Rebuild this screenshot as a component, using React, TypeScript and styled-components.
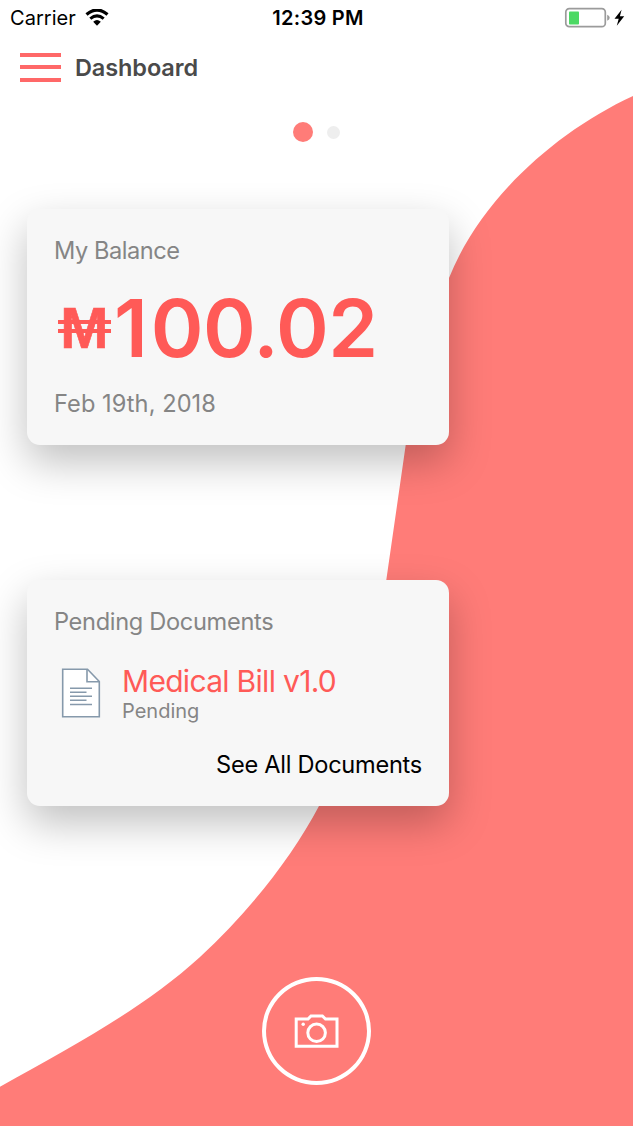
import React from "react";
import styled, { createGlobalStyle } from "styled-components";

const GlobalStyle = createGlobalStyle`
  * { box-sizing: border-box; }
  body { margin: 0; background: #fff; font-family: Inter, "Liberation Sans", sans-serif; }
`;

const Screen = styled.div`
  position: relative;
  width: 633px;
  height: 1126px;
  overflow: hidden;
  display: flex;
  flex-direction: column;
  background: #fff;
`;

const Wave = styled.svg`
  position: absolute;
  inset: 0;
`;

const Content = styled.div`
  position: relative;
  flex: 1;
  display: flex;
  flex-direction: column;
`;

const StatusBar = styled.div`
  height: 35px;
  padding: 0 7px 0 10px;
  display: grid;
  grid-template-columns: 1fr auto 1fr;
  align-items: center;
  color: #000;
`;

const StatusGroup = styled.div<{ $end?: boolean }>`
  display: flex;
  align-items: center;
  justify-content: ${(p) => (p.$end ? "flex-end" : "flex-start")};
`;

const Label = styled.span<{
  $size: number;
  $line: number;
  $color?: string;
  $weight?: number;
  $spacing?: number;
}>`
  font-size: ${(p) => p.$size}px;
  line-height: ${(p) => p.$line}px;
  color: ${(p) => p.$color ?? "#000"};
  font-weight: ${(p) => p.$weight ?? 400};
  letter-spacing: ${(p) => p.$spacing ?? 0}px;
  white-space: nowrap;
`;

const LeadDigit = styled.span`
  letter-spacing: 3px;
`;

const WifiIcon = styled.svg`
  margin-left: 9px;
`;

const Header = styled.header`
  height: 66px;
  padding-left: 20px;
  display: flex;
  align-items: center;
  gap: 14px;
`;

const MenuButton = styled.button`
  width: 41px;
  height: 29px;
  margin-bottom: 2px;
  padding: 0;
  border: 0;
  background: none;
  display: flex;
  flex-direction: column;
  justify-content: space-between;
`;

const MenuBar = styled.span`
  height: 4px;
  background: #ff6868;
`;

const Pager = styled.div`
  height: 62px;
  display: flex;
  justify-content: center;
  align-items: center;
  gap: 14px;
`;

const Dot = styled.span<{ $active?: boolean }>`
  width: ${(p) => (p.$active ? 20 : 13)}px;
  height: ${(p) => (p.$active ? 20 : 13)}px;
  border-radius: 50%;
  background: ${(p) => (p.$active ? "#ff7c78" : "#eee")};
`;

const Card = styled.section<{ $top: number; $height: number }>`
  width: 422px;
  height: ${(p) => p.$height}px;
  margin: ${(p) => p.$top}px 0 0 27px;
  padding: 27px 27px 0;
  border-radius: 13px;
  background: #f7f7f7;
  box-shadow: 0 17px 41px rgba(0, 0, 0, 0.25);
  display: flex;
  flex-direction: column;
`;

const Amount = styled.div`
  height: 96px;
  margin: 14px 0 13px;
  padding-left: 4px;
  display: flex;
  align-items: center;
  gap: 3px;
`;

const Currency = styled.span`
  position: relative;
  width: 53px;
  display: flex;
  justify-content: center;
  font: 700 58px/60px "Liberation Sans", Arial, sans-serif;
  color: #ff5a57;
  -webkit-text-stroke: 0.6px #ff5a57;

  &::before,
  &::after {
    content: "";
    position: absolute;
    left: 0;
    right: 0;
    height: 4px;
    background: #ff5a57;
  }
  &::before { top: 22px; }
  &::after { top: 31px; }
`;

const DocumentRow = styled.div`
  display: flex;
  margin-top: 29px;
  padding-left: 7px;
`;

const DocumentText = styled.div`
  display: flex;
  flex-direction: column;
  margin: -3px 0 0 21px;
`;

const Action = styled.button`
  margin: 27px 0 0;
  padding: 0;
  border: 0;
  background: none;
  font-family: inherit;
  align-self: flex-end;
`;

const Footer = styled.footer`
  flex: 1;
  display: flex;
  align-items: flex-end;
  justify-content: center;
  padding-bottom: 41px;
`;

const CameraButton = styled.button`
  width: 109px;
  height: 108px;
  padding: 0;
  border: 4px solid #fff;
  border-radius: 50%;
  background: none;
  display: flex;
  align-items: center;
  justify-content: center;
`;

export default function App() {
  return (
    <Screen>
      <GlobalStyle />
      <Wave width="633" height="1126" viewBox="0 0 633 1126">
        <path
          fill="#ff7c78"
          d="M633 96C555 132 480 200 449 278C425 327 412 400 405.7 445L386.3 580C373 673 345 757 319 806C292 857 249 912 200 957C144 1008 75 1045 0 1086.7V1126H633Z"
        />
      </Wave>
      <Content>
        <StatusBar>
          <StatusGroup>
            <Label $size={20} $line={24} $spacing={0.05}>Carrier</Label>
            <WifiIcon width="24" height="17" viewBox="0 0 24 17">
              <path d="M1.5 5.5Q12-3.5 22.5 5.5" fill="none" stroke="#000" strokeWidth="3.2" />
              <path d="M5.3 9.7Q12 4 18.7 9.7" fill="none" stroke="#000" strokeWidth="3" />
              <path d="M8.2 12.7Q12 9.5 15.8 12.7L12 16.8Z" />
            </WifiIcon>
          </StatusGroup>
          <Label $size={20} $line={24} $weight={600} $spacing={0.3}>12:39 PM</Label>
          <StatusGroup $end>
            <svg width="62" height="22" viewBox="0 0 62 22">
              <rect x="1.8" y="1.7" width="39.5" height="18" rx="3.5" fill="none" stroke="#9b9b9b" strokeWidth="1.7" />
              <rect x="5" y="4.5" width="10" height="13" rx="0.8" fill="#4cd964" />
              <path d="M43.2 7.7Q45.7 8.8 45.7 10.7T43.2 13.7Z" fill="#9b9b9b" />
              <path d="M57.6 2.8L50.5 11.8H54.7L52.8 18.7L60.2 9.3H55.9Z" />
            </svg>
          </StatusGroup>
        </StatusBar>
        <Header>
          <MenuButton aria-label="Menu">
            <MenuBar />
            <MenuBar />
            <MenuBar />
          </MenuButton>
          <Label $size={23.5} $line={30} $weight={600} $color="#4a4a4a" $spacing={-0.1}>Dashboard</Label>
        </Header>
        <Pager>
          <Dot $active />
          <Dot />
        </Pager>
        <Card $top={46} $height={236}>
          <Label $size={23.6} $line={30} $color="#858585" $spacing={-0.45}>My Balance</Label>
          <Amount>
            <Currency>M</Currency>
            <Label $size={80} $line={96} $weight={560} $color="#ff5a57" $spacing={-0.5}>
              <LeadDigit>1</LeadDigit>00.02
            </Label>
          </Amount>
          <Label $size={23.6} $line={30} $color="#858585" $spacing={0.07}>Feb 19th, 2018</Label>
        </Card>
        <Card $top={135} $height={226}>
          <Label $size={23.6} $line={30} $color="#858585" $spacing={-0.32}>Pending Documents</Label>
          <DocumentRow>
            <svg width="40" height="52" viewBox="0 0 40 52">
              <path d="M1.7 3.3H26.5L38.3 15.5V50.7H1.7Z" fill="#fff" stroke="#8699ab" strokeWidth="1.6" />
              <path d="M26 3.3V15.7H38.3" fill="none" stroke="#8699ab" strokeWidth="1.6" />
              <path d="M9 22.3H31M9 26.3H25.5M9 30.3H31M9 34.3H25.5M9 38.5H31" stroke="#8699ab" strokeWidth="1.5" />
            </svg>
            <DocumentText>
              <Label $size={30} $line={36} $color="#ff5a57" $spacing={-0.7}>Medical Bill v1.0</Label>
              <Label $size={20} $line={24} $color="#858585">Pending</Label>
            </DocumentText>
          </DocumentRow>
          <Action>
            <Label $size={23.6} $line={30} $spacing={-0.27}>See All Documents</Label>
          </Action>
        </Card>
        <Footer>
          <CameraButton aria-label="Take photo">
            <svg width="46" height="36" viewBox="0 0 46 36" fill="none" stroke="#fff">
              <path d="M2.2 6H14L17 3H28.4L31.5 6H43V33.2H2.2Z" strokeWidth="3" />
              <circle cx="22.6" cy="19.8" r="8.8" strokeWidth="3" />
              <circle cx="9.2" cy="11.2" r="1.7" fill="#fff" stroke="none" />
            </svg>
          </CameraButton>
        </Footer>
      </Content>
    </Screen>
  );
}
